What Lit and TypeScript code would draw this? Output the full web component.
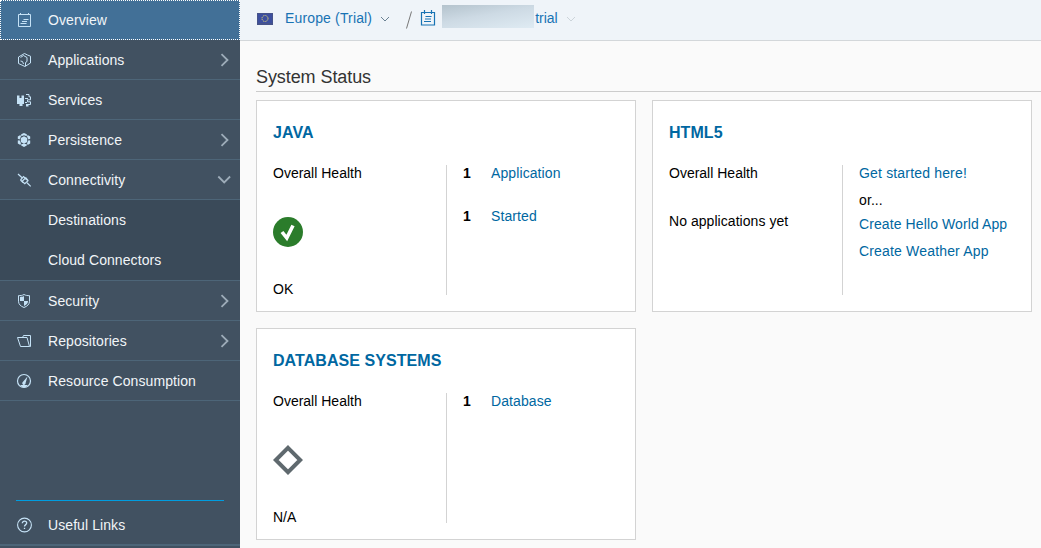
import { LitElement, html, css, svg, nothing, TemplateResult } from "lit";
import { customElement, property } from "lit/decorators.js";

const icons: Record<string, TemplateResult> = {
  overview: svg`<path d="M2.500 2.500h12v12h-12zM4.500 1v2M12.500 1v2M7.500 7.500h5M4.500 11.500h6M6 9.500h5"/>`,
  applications: svg`<path d="M8.500 1.500l3 1.500 3 1.200v6.800L9 14.500 2.500 11.500V5zM4.500 5.500l3-2 3.500 2v4l-1.500 1v3.500M4.500 9l2 .5 1 2.500"/>`,
  services: svg`<path class="fill" d="M1 3.500h2.500v2.500h2V3.500H8v8.500H6.500v2h-3v-2H1z"/><path d="M10 2.500h3v2.300h1.500v3H11.500v2h3v2.700H11.500M9 6.500h3M9 10.500h2"/><path class="fill" d="M10 12h2.500v2.500H10z"/>`,
  persistence: svg`<path class="fill" d="M8 1l2.800 1.300v2L8 3.300 5.200 4.300v-2zM1.800 4.400l2.600-1.300.6 1.500L3.500 7.500l-1.700-.7zM14.200 4.400l-2.600-1.300-.6 1.500 1.500 2.900 1.700-.7zM1.800 8.600l1.700-.4 1.500 3-.6 1.700-2.600-1.300zM14.200 8.600l-1.700-.4-1.500 3 .6 1.700 2.600-1.300zM5.200 12.300l2.800-.6 2.800.6v1.200L8 15l-2.800-1.500zM8 4.300l3.200 1.700v4L8 11.700 4.800 10V6z"/>`,
  connectivity: svg`<path stroke-width="1.200" d="M2 2l3.800 3.500M11 10.800l3.700 3.600M4.500 8l3-3.500 1.800 1.700M4.500 8l2.500 2.500M6 9.500l3.300-3.300 2.700 2.600-3.200 3-2.500-2.300M9.500 5.500l2.500 2.800"/>`,
  security: svg`<path d="M8 1.500c-1.700 1-3.700 1.200-5.500 1.100v5.600c0 3.300 2.300 5 5.500 6.300 3.200-1.300 5.500-3 5.500-6.300V2.600C11.700 2.700 9.700 2.500 8 1.500z"/><path class="fill" d="M4 4c1.500 0 3-.3 4-.9V8H4zM8 8h4c0 2.500-1.500 3.800-4 5z"/>`,
  repositories: svg`<path d="M1.500 4.500h9.500l2.500 9H4.500zM6.500 4.500l1-2h7v11h-1"/>`,
  resource: svg`<circle cx="8" cy="8" r="6.500" stroke-width="1.200"/><path class="fill" d="M11.500 3.500L9.600 10a1.700 1.700 0 1 1-2.800-1zM4 12h8l-2.500 2.200h-3z"/>`,
  help: svg`<circle cx="8.500" cy="8" r="6.900" stroke-width="1.100"/><path stroke-width="1.300" d="M6.300 6.300c0-3 4.400-2.700 4.400-.2 0 1.500-2.200 1.600-2.200 3.400M8.500 10.800v1.300"/>`,
};

@customElement("nav-row")
class NavRow extends LitElement {
  @property() icon = "";
  @property() label = "";
  @property() arrow = "";

  static styles = css`
    :host { display: flex; flex: none; box-sizing: border-box; height: 40px; align-items: center; padding: 0 8px 0 16px; border-bottom: 1px solid #4d6578; color: #f1f5f8; }
    :host([tall]) { height: 41px; }
    :host([selected]) { background: #427097; border-bottom-color: #427097; outline: 1px dotted #fff; outline-offset: -1px; }
    :host([child]) { background: #3a4a59; border-bottom-color: #3a4a59; }
    :host([child][tall]) { border-bottom-color: #4d6578; }
    :host([plain]) { border: 0; padding-top: 1px; }
    .glyph { width: 17px; height: 17px; flex: none; fill: none; stroke: #c5e2f6; stroke-width: 1; }
    .glyph .fill { fill: #c5e2f6; stroke: none; }
    .label { margin-left: 15px; flex: 1; white-space: nowrap; letter-spacing: 0.08px; }
    .arrow { width: 16px; height: 17px; fill: none; stroke: #9dacb9; stroke-width: 1.8; }
  `;

  render() {
    return html`
      <svg class="glyph" viewBox="0 -1 17 17">${icons[this.icon] ?? nothing}</svg>
      <span class="label">${this.label}</span>
      ${this.arrow
        ? html`<svg class="arrow" viewBox="0 -1 16 17">
            ${this.arrow === "down" ? svg`<path d="M2.300 4.500l5.900 6 5.900-6"/>` : svg`<path d="M5.500 2.200l6 5.800-6 5.800"/>`}
          </svg>`
        : nothing}
    `;
  }
}

@customElement("status-card")
class StatusCard extends LitElement {
  @property() heading = "";

  static styles = css`
    :host { display: block; box-sizing: border-box; height: 212px; padding: 22px 16px 16px; background: #fff; border: 1px solid #d3d3d3; }
    .heading { margin: 0; font-size: 16px; font-weight: 700; line-height: 20px; letter-spacing: 0.06px; color: #0067a1; }
    .body { display: grid; grid-template-columns: 173px 1fr; grid-template-rows: 130px; margin-top: 22px; line-height: 16px; }
    .health { display: flex; flex-direction: column; }
    .details { border-left: 1px solid #d3d3d3; padding-left: 16px; letter-spacing: 0.1px; }
  `;

  render() {
    return html`
      <h2 class="heading">${this.heading}</h2>
      <div class="body">
        <div class="health"><span>Overall Health</span><slot name="health"></slot></div>
        <div class="details"><slot></slot></div>
      </div>
    `;
  }
}

@customElement("app-root")
class AppRoot extends LitElement {
  static styles = css`
    :host { display: grid; grid-template-columns: 240px 1fr; height: 548px; overflow: hidden; background: #fafafa; color: #000; font: 14px/16px "Liberation Sans", Arial, sans-serif; }
    .side { display: flex; flex-direction: column; background: #415161; min-height: 0; }
    .foot { flex: none; margin-top: auto; border-bottom: 2px solid #4d6578; margin-bottom: 2px; }
    .foot-line { margin: 0 16px 3px; border-top: 1px solid #009de0; }
    .main { min-width: 0; }
    .top { display: flex; align-items: center; box-sizing: border-box; height: 41px; padding: 0 0 4px 17px; background: #eff4f9; border-bottom: 1px solid #d3d7da; color: #1873b4; white-space: nowrap; }
    .flag { width: 16px; height: 12px; margin: 1px 12px 0 0; }
    .region { letter-spacing: 0.15px; }
    .caret { width: 10px; height: 6px; fill: none; stroke: #6b8294; margin: 2px 0 0 8px; }
    .caret.faint { stroke: #ccd4da; }
    .slash { width: 8px; height: 18px; fill: none; stroke: #777; margin: 3px 0 0 15px; }
    .cal { width: 17px; height: 16px; fill: none; stroke: #1873b4; stroke-width: 1.200; margin: 0 0 0 6px; }
    .mask { width: 92px; height: 23px; margin: -3px 1px 0 6px; background: linear-gradient(170deg, #b4c3cd, #cddae4 45%, #dfebf3); }
    .content { padding: 25px 0 0 16px; }
    .title { margin: 0; height: 25px; font-size: 18px; font-weight: 400; line-height: 22px; letter-spacing: -0.08px; color: #333; border-bottom: 1px solid #ccc; }
    .cards { display: grid; grid-template-columns: 380px 380px; gap: 16px; margin-top: 8px; }
    .ok, .na { display: block; flex: none; width: 30px; height: 30px; margin-top: 36px; }
    .state { margin-top: 34px; }
    .none { margin-top: 32px; letter-spacing: 0.05px; }
    .count { display: grid; grid-template-columns: 28px 1fr; margin-bottom: 27px; }
    .link { color: #0067a1; text-decoration: none; }
    .starter { display: flex; flex-direction: column; }
    .starter .or { margin: 11px 0 8px; }
    .starter .last { margin-top: 11px; letter-spacing: 0.17px; }
    .starter .first { letter-spacing: 0.17px; }
  `;

  private count(label: string) {
    return html`<div class="count"><b>1</b><a class="link">${label}</a></div>`;
  }

  render() {
    return html`
      <nav class="side">
        <nav-row selected icon="overview" label="Overview"></nav-row>
        <nav-row icon="applications" label="Applications" arrow="right"></nav-row>
        <nav-row icon="services" label="Services"></nav-row>
        <nav-row icon="persistence" label="Persistence" arrow="right"></nav-row>
        <nav-row icon="connectivity" label="Connectivity" arrow="down"></nav-row>
        <nav-row child label="Destinations"></nav-row>
        <nav-row child tall label="Cloud Connectors"></nav-row>
        <nav-row icon="security" label="Security" arrow="right"></nav-row>
        <nav-row icon="repositories" label="Repositories" arrow="right"></nav-row>
        <nav-row icon="resource" label="Resource Consumption"></nav-row>
        <div class="foot">
          <div class="foot-line"></div>
          <nav-row plain icon="help" label="Useful Links"></nav-row>
        </div>
      </nav>
      <main class="main">
        <header class="top">
          <svg class="flag" viewBox="0 0 16 12"><rect width="16" height="12" fill="#46538a"/><rect x="1" y="1" width="14" height="9" fill="#3d4f9f"/><circle cx="8" cy="5.500" r="3" fill="none" stroke="#ddd473" stroke-dasharray="1.200 .7"/></svg>
          <span class="region">Europe (Trial)</span>
          <svg class="caret" viewBox="0 0 10 6"><path d="M1 1l4 4 4-4"/></svg>
          <svg class="slash" viewBox="0 0 8 18"><path d="M6.500 .5l-5 17"/></svg>
          <svg class="cal" viewBox="0 0 17 16"><path d="M2.500 2.500h13v12.500h-13zM5.500 0v4M12.500 0v4M6.500 6.500h6M5 11.500h7M6 9h6"/></svg>
          <div class="mask"></div>
          <span>trial</span>
          <svg class="caret faint" viewBox="0 0 10 6"><path d="M1 1l4 4 4-4"/></svg>
        </header>
        <section class="content">
          <h1 class="title">System Status</h1>
          <div class="cards">
            <status-card heading="JAVA">
              <svg slot="health" class="ok" viewBox="0 0 30 30"><circle cx="15" cy="15" r="15" fill="#2b7c2b"/><path d="M9 15l4.800 6L20 8.500" fill="none" stroke="#fff" stroke-width="3.600"/></svg>
              <span slot="health" class="state">OK</span>
              ${this.count("Application")}${this.count("Started")}
            </status-card>
            <status-card heading="HTML5">
              <span slot="health" class="none">No applications yet</span>
              <div class="starter">
                <a class="link first">Get started here!</a>
                <span class="or">or...</span>
                <a class="link">Create Hello World App</a>
                <a class="link last">Create Weather App</a>
              </div>
            </status-card>
            <status-card heading="DATABASE SYSTEMS">
              <svg slot="health" class="na" viewBox="0 0 30 30"><path d="M15 2.800L27.200 15 15 27.200 2.800 15z" fill="none" stroke="#5f696e" stroke-width="4"/></svg>
              <span slot="health" class="state">N/A</span>
              ${this.count("Database")}
            </status-card>
          </div>
        </section>
      </main>
    `;
  }
}
